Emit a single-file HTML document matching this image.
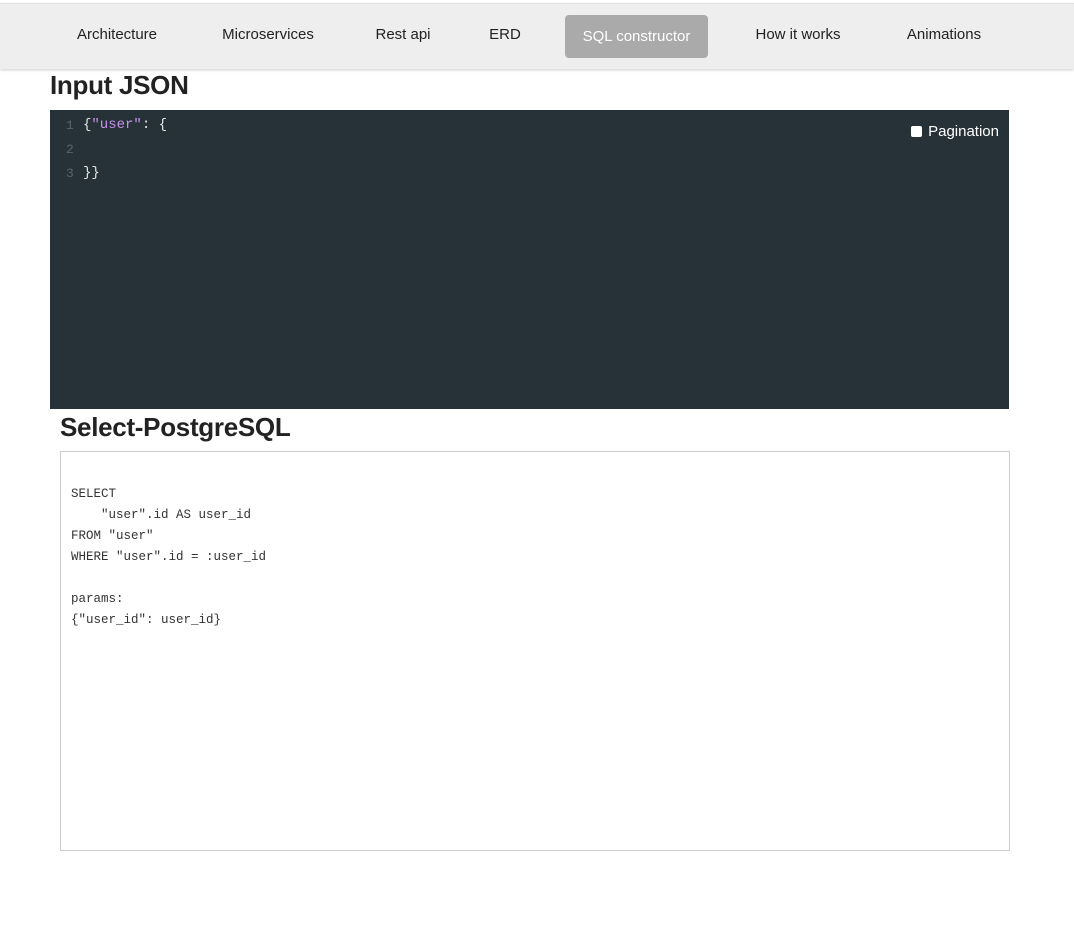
<!DOCTYPE html>
<html><head><meta charset="utf-8"><style>
body{margin:0;width:1074px;height:935px;background:#fff;font-family:"Liberation Sans",sans-serif;position:relative;overflow:hidden}
.nav{position:absolute;left:0;top:3px;width:1074px;height:65px;background:#eeeeee;border-top:1px solid #e2e2e2;box-shadow:0 1px 3px rgba(0,0,0,.2)}
.nav span{position:absolute;top:22px;font-size:15px;color:#222;transform:translateX(-50%);white-space:nowrap}
.nav .act{position:absolute;left:565px;top:11px;width:143px;height:43px;background:#aaa;border-radius:4px;color:#fff;transform:none;font-size:15px;line-height:43px;text-align:center}
h1{position:absolute;margin:0;font-size:26px;font-weight:bold;color:#222;letter-spacing:-0.3px}
.ed{position:absolute;left:50px;top:110px;width:959px;height:299px;background:#263238;font-family:"Liberation Mono",monospace;font-size:14px}
.ln{position:absolute;left:16px;color:#56656c;font-size:13px}
.cd{position:absolute;left:33px;color:#e6e6e6}
.pg{position:absolute;right:10px;top:13px;color:#fff;font-size:15px;font-family:"Liberation Sans",sans-serif}
.pg i{display:inline-block;width:11px;height:11px;background:#fff;border-radius:2px;margin-right:6px;vertical-align:-1px}
.sql{position:absolute;left:60px;top:451px;width:948px;height:398px;border:1px solid #ccc;background:#fff}
.sql pre{margin:0;position:absolute;left:10px;top:32px;font-family:"Liberation Mono",monospace;font-size:12.5px;line-height:21px;color:#333}
</style></head><body>
<div class="nav">
<span style="left:117px">Architecture</span>
<span style="left:268px">Microservices</span>
<span style="left:403px">Rest api</span>
<span style="left:505px">ERD</span>
<div class="act">SQL constructor</div>
<span style="left:798px">How it works</span>
<span style="left:944px">Animations</span>
</div>
<h1 style="left:50px;top:70px">Input JSON</h1>
<div class="ed">
<div class="ln" style="top:8px">1</div><div class="cd" style="top:7px">{<span style="color:#c792ea">"user"</span>: {</div>
<div class="ln" style="top:32px">2</div>
<div class="ln" style="top:56px">3</div><div class="cd" style="top:55px">}}</div>
<div class="pg"><i></i>Pagination</div>
</div>
<h1 style="left:60px;top:412px">Select-PostgreSQL</h1>
<div class="sql"><pre>SELECT
    "user".id AS user_id
FROM "user"
WHERE "user".id = :user_id

params:
{"user_id": user_id}</pre></div>
</body></html>
